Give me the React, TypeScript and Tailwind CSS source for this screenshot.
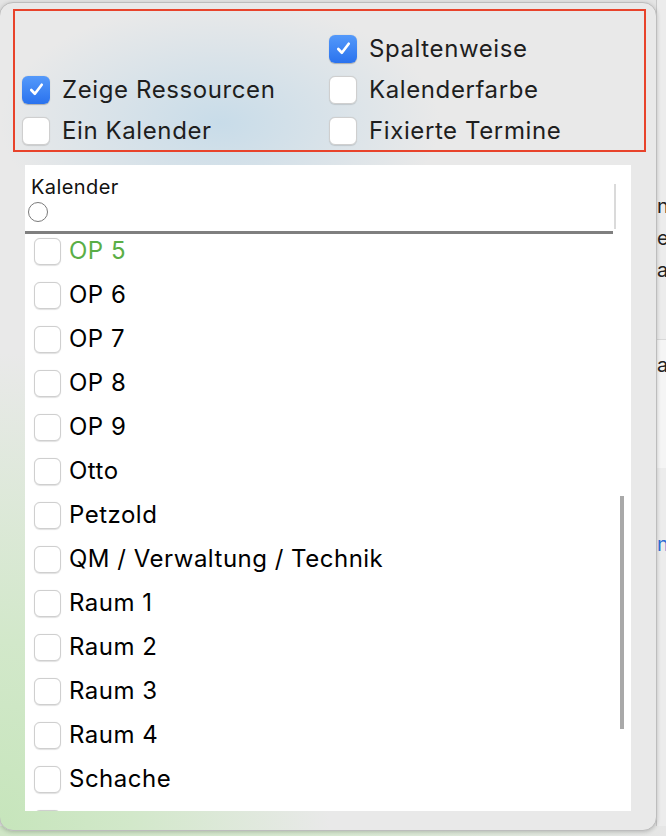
import React, { useState } from 'react';

type Item = { name: string; color?: string };

const calendars: Item[] = [
  { name: 'OP 5', color: 'text-[#5aae46]' },
  { name: 'OP 6' },
  { name: 'OP 7' },
  { name: 'OP 8' },
  { name: 'OP 9' },
  { name: 'Otto' },
  { name: 'Petzold' },
  { name: 'QM / Verwaltung / Technik' },
  { name: 'Raum 1' },
  { name: 'Raum 2' },
  { name: 'Raum 3' },
  { name: 'Raum 4' },
  { name: 'Schache' },
  { name: 'Schulz' },
];

const Check: React.FC<{ checked: boolean; onClick?: () => void; size?: string }> = ({
  checked,
  onClick,
  size = 'w-[28px] h-[28px]',
}) => (
  <button
    type="button"
    onClick={onClick}
    className={`${size} shrink-0 rounded-[6px] flex items-center justify-center ${
      checked
        ? 'bg-gradient-to-b from-[#5499fa] to-[#2a72ee] shadow-[0_0.5px_1px_rgba(0,0,0,0.25)]'
        : 'bg-white border border-[#cfcfcf] shadow-[0_0.5px_1px_rgba(0,0,0,0.12)]'
    }`}
  >
    {checked && (
      <svg viewBox="0 0 20 20" className="w-[19px] h-[19px]" fill="none">
        <path d="M4.5 10.5 L8.3 14.5 L15.5 5" stroke="white" strokeWidth="2.8" strokeLinecap="round" strokeLinejoin="round" />
      </svg>
    )}
  </button>
);

export default function App() {
  const [opts, setOpts] = useState({
    spalten: true,
    ressourcen: true,
    farbe: false,
    einKal: false,
    fixiert: false,
  });
  const [selected, setSelected] = useState<string[]>([]);

  const toggle = (k: keyof typeof opts) => setOpts(prev => ({ ...prev, [k]: !prev[k] }));
  const toggleCal = (name: string) =>
    setSelected(prev => (prev.includes(name) ? prev.filter(n => n !== name) : [...prev, name]));

  const font = "font-['Inter','Liberation_Sans',sans-serif]";

  return (
    <div className={`relative w-[666px] h-[836px] overflow-hidden bg-[#e4e4e4] ${font}`}>
      {/* app behind the popover */}
      <div className="absolute top-0 left-[656px] w-[10px] h-full flex flex-col bg-[#ececec] border-l border-[#c8c8c8] text-[20px] text-[#222] overflow-hidden">
        <div className="h-[190px]" />
        <div className="leading-[32px] whitespace-nowrap">ne</div>
        <div className="leading-[32px] whitespace-nowrap">e</div>
        <div className="leading-[32px] whitespace-nowrap">a</div>
        <div className="h-[54px] border-b border-[#d8d8d8]" />
        <div className="bg-[#f5f5f5] h-[128px] leading-[50px]">a</div>
        <div className="h-[60px]" />
        <div className="text-[#2c6fd6] leading-[32px]">n</div>
      </div>
      <div className="absolute bottom-0 left-0 w-full h-[10px] bg-gradient-to-r from-[#cfe6c6] via-[#d9ead2] to-[#e6e6e6]" />

      {/* popover */}
      <div className="absolute left-[-1px] top-[2px] w-[658px] h-[829px] rounded-[14px] overflow-hidden border border-[#bdbdbd] shadow-[0_1px_4px_rgba(0,0,0,0.2)] bg-[#e9e9e9] bg-[radial-gradient(ellipse_220px_120px_at_220px_120px,#c8dce9_0%,transparent_100%),radial-gradient(ellipse_330px_480px_at_0px_830px,#c6e5bb_0%,#d2e8ca_40%,transparent_100%)] flex flex-col">
        {/* options */}
        <div className="mt-[6px] ml-[13px] w-[633px] h-[143px] border-2 border-[#e8432b] grid grid-cols-[307px_1fr] content-start pt-[23px] pl-[7px] gap-y-[12px] text-[24px] tracking-[0.6px] text-[#1e1e1e]">
          <div />
          <label className="flex items-center gap-[12px] h-[29px]">
            <Check checked={opts.spalten} onClick={() => toggle('spalten')} />
            <span>Spaltenweise</span>
          </label>
          <label className="flex items-center gap-[12px] h-[29px]">
            <Check checked={opts.ressourcen} onClick={() => toggle('ressourcen')} />
            <span>Zeige Ressourcen</span>
          </label>
          <label className="flex items-center gap-[12px] h-[29px]">
            <Check checked={opts.farbe} onClick={() => toggle('farbe')} />
            <span>Kalenderfarbe</span>
          </label>
          <label className="flex items-center gap-[12px] h-[29px]">
            <Check checked={opts.einKal} onClick={() => toggle('einKal')} />
            <span>Ein Kalender</span>
          </label>
          <label className="flex items-center gap-[12px] h-[29px]">
            <Check checked={opts.fixiert} onClick={() => toggle('fixiert')} />
            <span>Fixierte Termine</span>
          </label>
        </div>

        {/* calendar list */}
        <div className="mt-[13px] ml-[25px] w-[606px] h-[646px] bg-white flex flex-col overflow-hidden">
          <div className="relative h-[69px] shrink-0 border-b-[3px] border-[#7f7f7f] mr-[18px]">
            <div className="pt-[10px] pl-[6px] text-[20px] leading-[24px] tracking-[0.4px] text-[#111]">Kalender</div>
            <div className="ml-[3px] mt-[3px] w-[20px] h-[20px] rounded-full border border-[#7a7a7a] bg-white" />
            <div className="absolute right-[-3px] top-[19px] w-[2px] h-[45px] bg-[#dadada]" />
          </div>
          <div className="relative flex-1 overflow-hidden">
            <div className="absolute right-[7px] top-[262px] w-[4px] h-[233px] bg-[#a9a9a9]" />
            <ul className="flex flex-col mt-[-5px]">
              {calendars.map(c => (
                <li key={c.name} className="h-[44px] flex items-center pl-[9px] gap-[8px]">
                  <Check
                    size="w-[27px] h-[27px]"
                    checked={selected.includes(c.name)}
                    onClick={() => toggleCal(c.name)}
                  />
                  <span className={`text-[24px] tracking-[0.5px] ${c.color ?? 'text-black'}`}>{c.name}</span>
                </li>
              ))}
            </ul>
          </div>
        </div>
      </div>
    </div>
  );
}
